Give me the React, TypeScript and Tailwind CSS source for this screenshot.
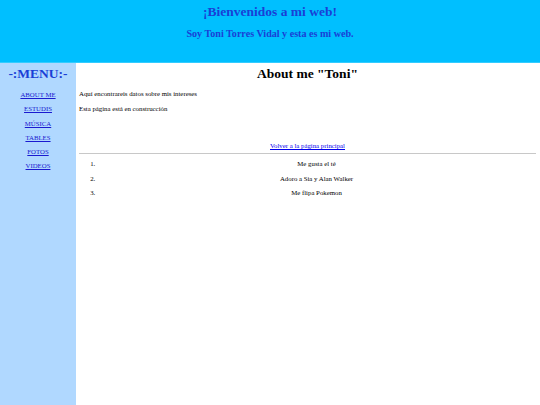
import React from "react";

export default function App() {
  const links = ["ABOUT ME", "ESTUDIS", "MÚSICA", "TABLES", "FOTOS", "VIDEOS"];
  const items = ["Me gusta el té", "Adoro a Sia y Alan Walker", "Me flipa Pokemon"];
  return (
    <div
      className="min-h-[405px] flex flex-col bg-white text-black"
      style={{ fontFamily: '"Liberation Serif", "Times New Roman", serif' }}
    >
      <header className="h-[63px] bg-[#00bfff] border-b border-[#33ccff] text-center text-[#1a3fd6]">
        <h1 className="pt-[4px] text-[13.5px] leading-[15px] font-bold">¡Bienvenidos a mi web!</h1>
        <h2 className="mt-[9px] text-[10.1px] leading-[11px] font-bold">Soy Toni Torres Vidal y esta es mi web.</h2>
      </header>
      <div className="flex flex-1">
        <aside className="w-[76px] bg-[#b0d8ff] text-center pt-[3px]">
          <h1 className="text-[13.5px] leading-[15px] font-bold text-[#1a3fd6]">-:MENU:-</h1>
          <nav className="mt-[10px] flex flex-col items-center gap-[6.6px]">
            {links.map((l) => (
              <a key={l} href="#" className="text-[6.8px] leading-[7.7px] text-[#1a1ad0] underline">
                {l}
              </a>
            ))}
          </nav>
        </aside>
        <main className="flex-1 pl-[3px] pr-[4px] pt-[3px] text-[6.8px] leading-[7.7px]">
          <h1 className="text-center text-[13.5px] leading-[15px] font-bold">About me "Toni"</h1>
          <p className="mt-[9px]">Aquí encontrareis datos sobre mis intereses</p>
          <p className="mt-[7px]">Esta página está en construcción</p>
          <div className="mt-[30px] text-center">
            <a href="#" className="text-[#0000ee] underline">Volver a la página principal</a>
          </div>
          <hr className="mt-[3px] border-t border-[#c8c8c8]" />
          <ol className="mt-[6px] list-decimal pl-[18px] flex flex-col gap-[6.9px]">
            {items.map((i) => (
              <li key={i} className="text-center">
                {i}
              </li>
            ))}
          </ol>
        </main>
      </div>
    </div>
  );
}
